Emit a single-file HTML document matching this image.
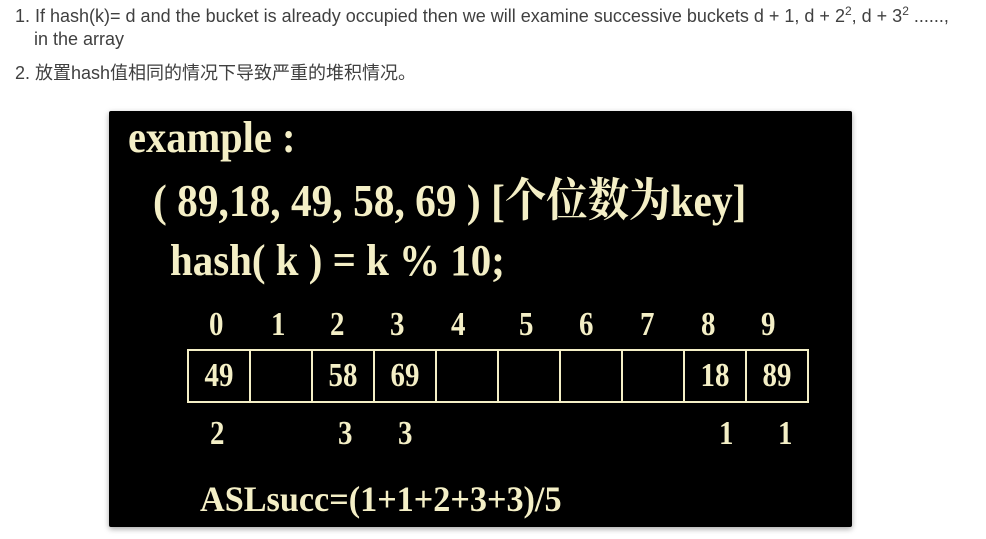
<!DOCTYPE html>
<html><head><meta charset="utf-8"><style>
body{margin:0;width:986px;height:539px;background:#fff;overflow:hidden;position:relative;font-family:"Liberation Sans","Noto Sans CJK SC",sans-serif;color:#404040}
.t{position:absolute;font-size:18px;white-space:nowrap;line-height:22px}
.img{position:absolute;left:109px;top:111px;width:743px;height:416px;background:#000;box-shadow:0 2px 6px rgba(0,0,0,.35);border-radius:2px}
.s{position:absolute;font-family:"Liberation Serif","Noto Serif CJK SC",serif;font-weight:bold;color:#f4efc6;white-space:nowrap;transform-origin:0 0;line-height:1}
.d{font-size:34px;transform:scaleX(.85)}
table{position:absolute;left:78px;top:238px;border-collapse:collapse}
td{width:60px;height:50px;border:2px solid #f4efc6;padding:0;text-align:center;font-family:"Liberation Serif",serif;font-weight:bold;color:#f4efc6;font-size:34px}
td span{display:inline-block;transform:scaleX(.85)}
</style></head><body>
<div class="t" style="left:15px;top:0px">1. If hash(k)= d and the bucket is already occupied then we will examine successive buckets d + 1, d + 2<sup style="font-size:12px">2</sup>, d + 3<sup style="font-size:12px">2</sup> ......,</div>
<div class="t" style="left:34px;top:28px">in the array</div>
<div class="t" style="left:15px;top:62px">2. 放置hash值相同的情况下导致严重的堆积情况。</div>
<div class="img">
<div class="s" style="left:19px;top:5px;font-size:44px;transform:scaleX(.92)">example :</div>
<div class="s" style="left:44px;top:67px;font-size:46px;transform:scaleX(.9)">( 89,18, 49, 58, 69 ) [个位数为key]</div>
<div class="s" style="left:61px;top:128px;font-size:44px;transform:scaleX(.93)">hash( k ) = k % 10;</div>
<div class="s d" style="left:100px;top:197px">0</div>
<div class="s d" style="left:162px;top:197px">1</div>
<div class="s d" style="left:221px;top:197px">2</div>
<div class="s d" style="left:281px;top:197px">3</div>
<div class="s d" style="left:342px;top:197px">4</div>
<div class="s d" style="left:410px;top:197px">5</div>
<div class="s d" style="left:470px;top:197px">6</div>
<div class="s d" style="left:531px;top:197px">7</div>
<div class="s d" style="left:592px;top:197px">8</div>
<div class="s d" style="left:652px;top:197px">9</div>
<table><tr><td><span>49</span></td><td></td><td><span>58</span></td><td><span>69</span></td><td></td><td></td><td></td><td></td><td><span>18</span></td><td><span>89</span></td></tr></table>
<div class="s d" style="left:101px;top:306px">2</div>
<div class="s d" style="left:229px;top:306px">3</div>
<div class="s d" style="left:289px;top:306px">3</div>
<div class="s d" style="left:610px;top:306px">1</div>
<div class="s d" style="left:669px;top:306px">1</div>
<div class="s" style="left:91px;top:370px;font-size:36px;transform:scaleX(.95)">ASLsucc=(1+1+2+3+3)/5</div>
</div>
</body></html>
